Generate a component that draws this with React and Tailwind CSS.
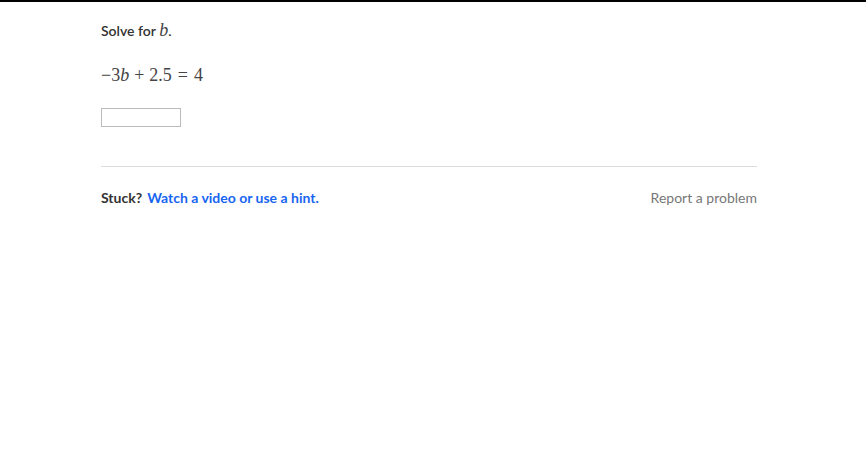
import React from "react";

const serif = { fontFamily: '"Liberation Serif", "DejaVu Serif", serif' };

export default function App() {
  return (
    <div className="min-h-screen bg-white border-t-2 border-black" style={{ fontFamily: "Lato, 'Noto Sans', sans-serif" }}>
      <div className="w-[656px] ml-[101px] pt-[18px]">
        <p className="text-[14px] text-[#333] leading-[20px] font-semibold flex items-baseline">
          Solve for&nbsp;
          <span className="text-[18px] font-normal italic text-[#444]" style={serif}>b</span>.
        </p>
        <div className="mt-[22px] h-[24px] flex items-center text-[18px] text-[#444] font-normal" style={serif}>
          <span>−3</span>
          <i>b</i>
          <span className="mx-[5px]">+</span>
          <span>2.5</span>
          <span className="mx-[6px]">=</span>
          <span>4</span>
        </div>
        <input type="text" className="mt-[21px] block w-[80px] h-[19px] border border-[#bbb] outline-none" />
        <div className="mt-[39px] border-t border-[#ddd]" />
        <div className="mt-[21px] flex items-center justify-between text-[14px] leading-[20px]">
          <div className="font-bold">
            <span className="text-[#333]">Stuck?</span>
            <span className="text-[#1865f2] ml-[5px]">Watch a video or use a hint.</span>
          </div>
          <span className="text-[#777]">Report a problem</span>
        </div>
      </div>
    </div>
  );
}
